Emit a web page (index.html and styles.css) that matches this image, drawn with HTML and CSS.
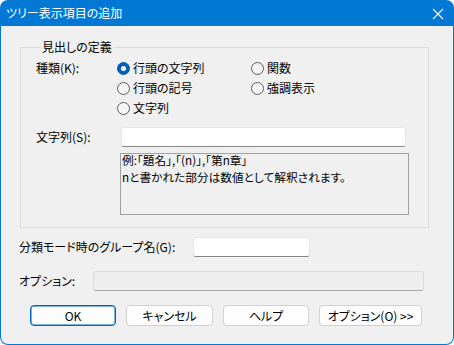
FILE: index.html
```html
<!DOCTYPE html>
<html>
  <head>
    <title>ツリー表示項目の追加</title>
    <link rel="stylesheet" href="styles.css">
  </head>
  <body>
    <div class="window">
      <div class="titlebar">
        <span class="title">ツリー表示項目の追加</span>
        <svg class="close" width="12" height="12" viewBox="0 0 12 12">
          <path d="M1 1 L11 11 M11 1 L1 11" stroke="#fff" stroke-width="1.1" fill="none" />
        </svg>
      </div>

      <div class="client">
        <fieldset class="group">
          <legend>見出しの定義</legend>

          <div class="kind-row">
            <div class="label">種類(K):</div>
            <div class="radios">
              <div class="radio-item"><span class="radio checked"></span>行頭の文字列</div>
              <div class="radio-item"><span class="radio"></span>関数</div>
              <div class="radio-item"><span class="radio"></span>行頭の記号</div>
              <div class="radio-item"><span class="radio"></span>強調表示</div>
              <div class="radio-item"><span class="radio"></span>文字列</div>
            </div>
          </div>

          <div class="string-row">
            <div class="label">文字列(S):</div>
            <div class="input string-input"></div>
          </div>

          <div class="hint">
            <div class="hint-lines">
              <div>例:「題名」,「(n)」,「第n章」</div>
              <div>nと書かれた部分は数値として解釈されます。</div>
            </div>
          </div>
        </fieldset>

        <div class="form-row group-row">
          <div class="label group-label">分類モード時のグループ名(G):</div>
          <div class="input group-input"></div>
        </div>

        <div class="form-row option-row">
          <div class="label option-label">オプション:</div>
          <div class="input disabled option-input"></div>
        </div>

        <div class="buttons">
          <button class="btn default btn-ok">OK</button>
          <button class="btn btn-cancel">キャンセル</button>
          <button class="btn btn-help">ヘルプ</button>
          <button class="btn btn-option">オプション(O) &gt;&gt;</button>
        </div>
      </div>
    </div>
  </body>
</html>
```

FILE: styles.css
```css
body {
  margin: 0;
  background-color: #ffffff;
  font-family: "Noto Sans CJK JP", sans-serif;
  font-size: 12px;
  font-feature-settings: "palt";
  color: #000000;
}
.window {
  width: 454px;
  height: 345px;
  box-sizing: border-box;
  background-color: #0078d4;
  border-radius: 8px;
  overflow: hidden;
  display: flex;
  flex-direction: column;
}
.titlebar {
  height: 26px;
  flex: none;
  display: flex;
  align-items: center;
  justify-content: space-between;
  padding: 0 10px 0 6px;
  color: #ffffff;
}
.title {
  font-size: 12px;
  line-height: 14px;
}
.close {
  margin-top: 1px;
}
.client {
  flex: 1;
  margin: 0 1px 1px 1px;
  background-color: #f0f0f0;
  border-radius: 0 0 7px 7px;
  padding: 14px 0 0 18px;
}
.group {
  width: 409px;
  box-sizing: border-box;
  margin: 0 0 0 1px;
  padding: 0 19px 12px 15px;
  border: 1px solid #dcdcdc;
  min-width: 0;
}
.group legend {
  margin-left: 5px;
  padding: 0 1px;
  line-height: 14px;
}
.label {
  line-height: 20px;
  white-space: nowrap;
}
.kind-row {
  display: flex;
  margin-top: 4px;
}
.kind-row .label {
  width: 81px;
  flex: none;
}
.radios {
  display: grid;
  grid-template-columns: 134px auto;
  grid-auto-rows: 20px;
}
.radio-item {
  display: flex;
  align-items: center;
  line-height: 20px;
}
.radio {
  width: 11px;
  height: 11px;
  border: 1px solid #5d5d5d;
  border-radius: 50%;
  background-color: #f5f5f5;
  margin-right: 3px;
  flex: none;
  box-sizing: content-box;
}
.radio.checked {
  border-color: #005fb8;
  background-color: #005fb8;
  position: relative;
}
.radio.checked::after {
  content: "";
  position: absolute;
  left: 3px;
  top: 3px;
  width: 5px;
  height: 5px;
  border-radius: 50%;
  background-color: #ffffff;
}
.input {
  height: 20px;
  box-sizing: border-box;
  background-color: #ffffff;
  border: 1px solid #e5e5e5;
  border-bottom-color: #868686;
  border-radius: 3px;
}
.input.disabled {
  background-color: #eeeeee;
  border-color: #dcdcdc;
  border-bottom-color: #a8a8a8;
}
.string-row {
  display: flex;
  margin-top: 9px;
}
.string-row .label {
  width: 85px;
  flex: none;
}
.string-input {
  width: 285px;
}
.hint {
  margin: 6px 0 0 84px;
  width: 289px;
  height: 62px;
  box-sizing: border-box;
  border: 1px solid #a0a0a0;
  padding: 0 1px;
  white-space: nowrap;
}
.hint-lines {
  margin-top: -3px;
  font-size: 11.7px;
  line-height: 17px;
}
.form-row {
  display: flex;
}
.group-row {
  margin-top: 9px;
}
.group-label {
  width: 174px;
}
.group-input {
  width: 117px;
}
.option-row {
  margin-top: 14px;
}
.option-label {
  width: 74px;
}
.option-input {
  width: 331px;
}
.buttons {
  display: flex;
  gap: 10px;
  margin: 14px 0 0 11px;
}
.btn {
  height: 21px;
  box-sizing: border-box;
  font-family: "Noto Sans CJK JP", sans-serif;
  font-size: 12px;
  font-feature-settings: "palt";
  line-height: 17px;
  padding: 0;
  background-color: #fdfdfd;
  border: 1px solid #d0d0d0;
  border-radius: 4px;
  color: #000000;
}
.btn.default {
  border-color: #0067c0;
  box-shadow: inset 0 0 0 0.5px #0067c0;
}
.btn-ok {
  width: 86px;
}
.btn-cancel {
  width: 87px;
}
.btn-help {
  width: 86px;
}
.btn-option {
  width: 103px;
}
```
